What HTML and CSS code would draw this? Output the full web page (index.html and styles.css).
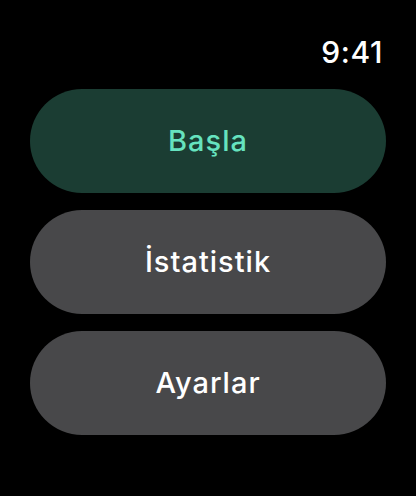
FILE: index.html
```html
<!DOCTYPE html>
<html lang="tr">
<head>
<meta charset="utf-8">
<title>Menü</title>
<link rel="stylesheet" href="styles.css">
</head>
<body>
<div class="screen">
  <header class="status">
    <span class="time">9:41</span>
  </header>
  <nav class="menu">
    <button class="pill pill-primary">Başla</button>
    <button class="pill">İstatistik</button>
    <button class="pill">Ayarlar</button>
  </nav>
</div>
</body>
</html>
```
FILE: styles.css
```css
html, body {
  margin: 0;
  padding: 0;
  background: #000;
}
.screen {
  width: 416px;
  height: 496px;
  box-sizing: border-box;
  padding: 34px 30px 0 30px;
  font-family: Inter, "Noto Sans", sans-serif;
  color: #fff;
}
.status {
  display: flex;
  justify-content: flex-end;
  height: 36px;
  padding-right: 3px;
}
.time {
  font-size: 30px;
  line-height: 36px;
  font-weight: 500;
  letter-spacing: 0.6px;
}
.menu {
  margin-top: 19px;
  display: flex;
  flex-direction: column;
  gap: 17px;
}
.pill {
  height: 104px;
  width: 356px;
  border: none;
  border-radius: 52px;
  background: #48484a;
  color: #fff;
  font-family: inherit;
  font-size: 29px;
  font-weight: 500;
  letter-spacing: 1px;
  padding: 0 0 2px 0;
  display: flex;
  align-items: center;
  justify-content: center;
}
.pill-primary {
  background: #1b3d33;
  color: #66e3bf;
}
```
